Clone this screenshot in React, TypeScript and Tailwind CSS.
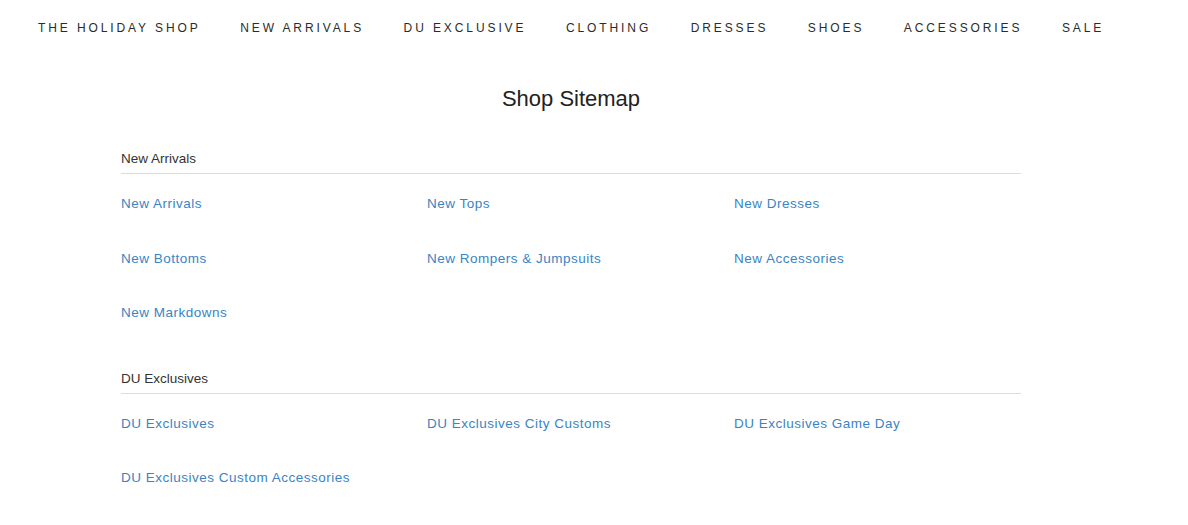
import React from "react";

const navItems = [
  "THE HOLIDAY SHOP",
  "NEW ARRIVALS",
  "DU EXCLUSIVE",
  "CLOTHING",
  "DRESSES",
  "SHOES",
  "ACCESSORIES",
  "SALE",
];

const sections = [
  {
    title: "New Arrivals",
    links: [
      "New Arrivals",
      "New Tops",
      "New Dresses",
      "New Bottoms",
      "New Rompers & Jumpsuits",
      "New Accessories",
      "New Markdowns",
    ],
  },
  {
    title: "DU Exclusives",
    links: [
      "DU Exclusives",
      "DU Exclusives City Customs",
      "DU Exclusives Game Day",
      "DU Exclusives Custom Accessories",
    ],
  },
];

export default function App() {
  return (
    <div className="min-h-[525px] bg-white font-['Liberation_Sans',Arial,sans-serif]">
      <nav className="flex h-[56px] items-center gap-[39.5px] pl-[38px]">
        {navItems.map((item) => (
          <a key={item} href="#" className="text-[12px] tracking-[2.9px] text-[#2b2b2b]">
            {item}
          </a>
        ))}
      </nav>

      <h1 className="mt-[29px] text-center text-[22px] leading-[28px] text-[#222] -ml-[46px]">
        Shop Sitemap
      </h1>

      <div className="ml-[121px] w-[900px] pt-[38px]">
        {sections.map((section) => (
          <section key={section.title} className="mb-[19px]">
            <h2 className="border-b border-[#dcdcdc] pb-[6px] text-[13.5px] leading-[16px] text-[#333]">
              {section.title}
            </h2>
            <div className="grid grid-cols-[306px_307px_1fr] pt-[14px]">
              {section.links.map((link) => (
                <a
                  key={link}
                  href="#"
                  className="h-[54.5px] text-[13.5px] leading-[32px] tracking-[0.5px] text-[#3a84c4]"
                >
                  {link}
                </a>
              ))}
            </div>
          </section>
        ))}
      </div>
    </div>
  );
}
